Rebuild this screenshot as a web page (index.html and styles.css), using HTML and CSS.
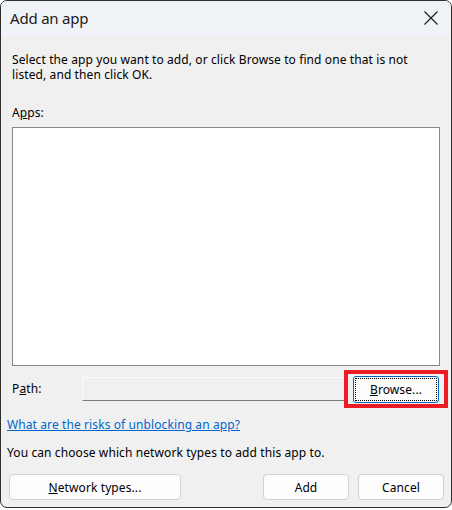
FILE: index.html
```html
<!DOCTYPE html>
<html>
<head>
<meta charset="utf-8">
<link rel="stylesheet" href="styles.css">
</head>
<body>
<div class="window">
  <div class="titlebar">
    <span class="title">Add an app</span>
    <svg class="close" width="14" height="14" viewBox="0 0 14 14"><path d="M0.5 0.5 L13.5 13.5 M13.5 0.5 L0.5 13.5" stroke="#1a1a1a" stroke-width="1.1" fill="none"/></svg>
  </div>
  <div class="content">
    <p class="intro">Select the app you want to add, or click Browse to find one that is not listed, and then click OK.</p>
    <div class="label apps-label">A<u>p</u>ps:</div>
    <div class="listbox"></div>
    <div class="path-row">
      <span class="label">P<u>a</u>th:</span>
      <div class="path-field"></div>
      <div class="browse-wrap">
        <button class="btn browse"><span class="focus"><u>B</u>rowse...</span></button>
      </div>
    </div>
    <a class="link" href="#">What are the risks of unblocking an app?</a>
    <p class="note">You can choose which network types to add this app to.</p>
    <div class="buttons">
      <button class="btn net"><u>N</u>etwork types...</button>
      <div class="spacer"></div>
      <button class="btn add">Add</button>
      <button class="btn cancel">Cancel</button>
    </div>
  </div>
</div>
</body>
</html>
```
FILE: styles.css
```css
html, body {
  margin: 0;
  padding: 0;
  background: #ffffff;
}
body {
  width: 452px;
  height: 510px;
  overflow: hidden;
  font-family: "Noto Sans", "Open Sans", sans-serif;
  font-size: 12px;
  color: #000;
}
.window {
  box-sizing: border-box;
  width: 452px;
  height: 508px;
  border: 1px solid #2e2e2e;
  border-radius: 7px;
  background: #f0f0f0;
  overflow: hidden;
  display: flex;
  flex-direction: column;
}
.titlebar {
  height: 35px;
  flex: none;
  background: #eff3f7;
  display: flex;
  align-items: center;
  padding: 0 13px 0 9px;
  justify-content: space-between;
}
.title {
  font-size: 15px;
  color: #1a1a1a;
  letter-spacing: -0.2px;
  margin-top: -1px;
}
.close {
  display: block;
  margin-top: -1px;
}
.content {
  display: flex;
  flex-direction: column;
  padding: 0 11px 0 6px;
}
.intro {
  margin: 16px 0 0 5px;
  line-height: 15px;
  letter-spacing: 0.1px;
  width: 420px;
}
.label {
  line-height: 15px;
  letter-spacing: 0.1px;
}
.apps-label {
  margin: 23px 0 0 5px;
}
.listbox {
  margin: 7px 0 0 5px;
  height: 237px;
  background: #fff;
  border: 1px solid #828790;
}
.path-row {
  display: flex;
  align-items: center;
  margin-top: 10px;
  height: 27px;
  padding-left: 5px;
}
.path-row .label {
  width: 70px;
  flex: none;
  margin-top: -3px;
}
.path-field {
  width: 263px;
  height: 24px;
  box-sizing: border-box;
  border-top: 1px solid #fbfbfb;
  border-left: 1px solid #fbfbfb;
  border-bottom: 1px solid #7a7a7a;
  background: #f0f0f0;
  margin-top: -1px;
}
.browse-wrap {
  position: relative;
  margin-left: 8px;
}
.browse-wrap::after {
  content: "";
  position: absolute;
  left: -9px;
  top: -6px;
  width: 96px;
  height: 30px;
  border: 4px solid #ed1c24;
  pointer-events: none;
}
.btn {
  font-family: "Noto Sans", "Open Sans", sans-serif;
  font-size: 12px;
  color: #000;
  background: #fdfdfd;
  border: 1px solid #d0d0d0;
  border-radius: 4px;
  height: 26px;
  padding: 0;
  letter-spacing: 0.1px;
}
.browse {
  width: 86px;
  height: 27px;
  border: 1px solid #0067c0;
  border-radius: 3px;
  display: flex;
  padding: 1px;
  box-sizing: border-box;
}
.browse .focus {
  flex: 1;
  border: 1px dotted #000;
  display: flex;
  align-items: center;
  justify-content: center;
}
.link {
  margin-top: 14px;
  color: #0066cc;
  line-height: 15px;
  letter-spacing: 0.1px;
  text-decoration: underline;
  align-self: flex-start;
}
.note {
  margin: 13px 0 0 0;
  line-height: 15px;
  letter-spacing: 0.1px;
}
.buttons {
  display: flex;
  margin-top: 14px;
  margin-right: -4px;
  padding-left: 2px;
  gap: 9px;
}
.spacer {
  flex: 1;
}
.net {
  width: 172px;
}
.add, .cancel {
  width: 86px;
}
```
